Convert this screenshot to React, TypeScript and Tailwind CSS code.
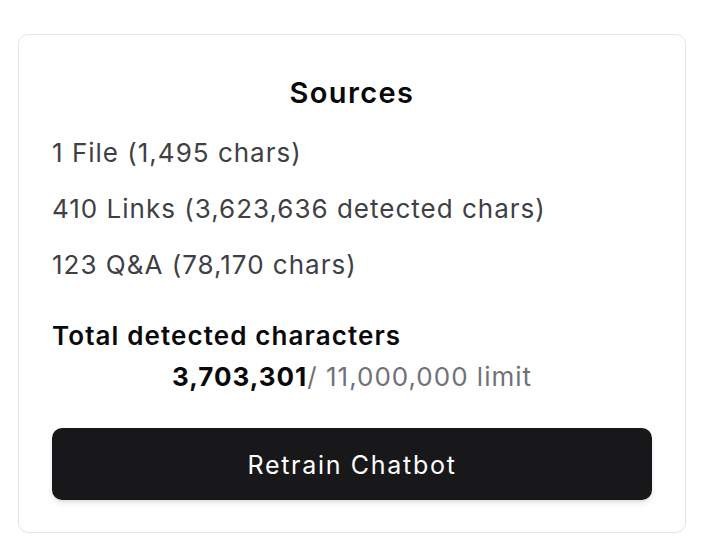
export default function App() {
    return (
        <div className="min-h-screen bg-white pt-[34px] pl-[18px]" style={{ fontFamily: 'Inter, "Noto Sans", sans-serif' }}>
            <div className="w-[668px] h-[499px] rounded-[10px] border border-[#e4e4e7] bg-white px-[33px] pt-[40px] pb-[32px] flex flex-col">
                <h2 className="text-center text-[29px] leading-[36px] font-semibold tracking-[1.4px] text-[#09090b]">Sources</h2>

                <div className="mt-[26px] flex flex-col gap-[24px] text-[26px] leading-[32px] tracking-[1px] text-[#3f3f46]">
                    <p>1 File (1,495 chars)</p>
                    <p>410 Links (3,623,636 detected chars)</p>
                    <p>123 Q&amp;A (78,170 chars)</p>
                </div>

                <div className="mt-[39px] text-[26px] leading-[32px] tracking-[1.1px]">
                    <p className="font-semibold text-[#09090b]">Total detected characters</p>
                    <p className="mt-[9px] text-center tracking-[1px] text-[#71717a]">
                        <span className="font-bold text-[#09090b]">3,703,301</span>/ 11,000,000 limit
                    </p>
                </div>

                <button className="mt-[35px] h-[72px] w-full rounded-[10px] bg-[#18181b] pt-[3px] text-[25px] font-normal tracking-[1.7px] text-white shadow-md">
                    Retrain Chatbot
                </button>
            </div>
        </div>
    );
}
